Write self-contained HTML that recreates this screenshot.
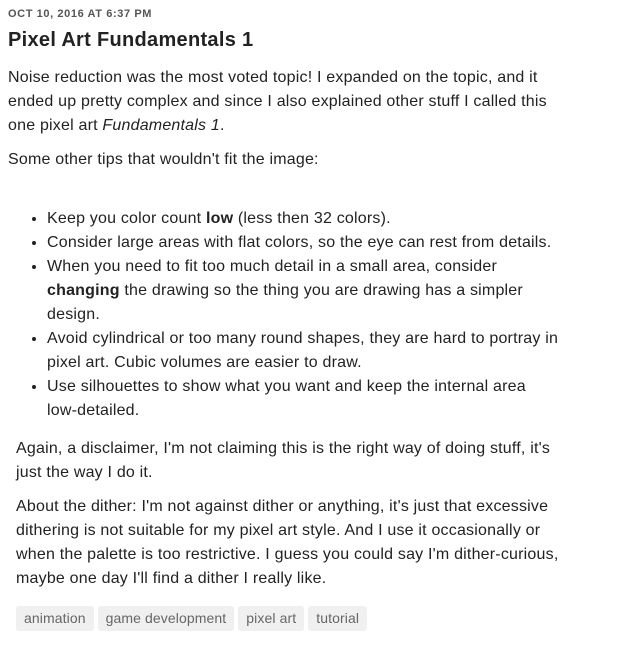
<!DOCTYPE html>
<html><head><style>
body{margin:0;background:#fff;color:#222;font-family:"Liberation Sans",sans-serif;font-size:16px;line-height:24px;width:632px;height:660px;overflow:hidden;white-space:nowrap}
.x{letter-spacing:0.2px}
.d{position:absolute;left:8px;top:7px;font-size:11px;font-weight:bold;letter-spacing:0.6px;color:#555;line-height:14px}
h1{position:absolute;left:8px;top:26px;margin:0;font-size:20px;line-height:28px;font-weight:bold;color:#222;letter-spacing:0.3px}
.p{position:absolute;left:8px}
ul{position:absolute;left:8px;top:207px;margin:0;padding-left:39px}
li{margin:0}
.tags{position:absolute;left:16px;top:606px}
.t{display:inline-block;background:#f0f0f0;color:#666;font-size:14px;height:25px;line-height:25px;padding:0 8px;border-radius:3px;margin-right:4px;letter-spacing:0.1px}
</style></head><body>
<div class="d">OCT 10, 2016 AT 6:37 PM</div>
<h1>Pixel Art Fundamentals 1</h1>
<div class="x">
<div class="p" style="top:66px">Noise reduction was the most voted topic! I expanded on the topic, and it<br>ended up pretty complex and since I also explained other stuff I called this<br>one pixel art <i>Fundamentals 1</i>.</div>
<div class="p" style="top:148px">Some other tips that wouldn't fit the image:</div>
<ul>
<li>Keep you color count <b>low</b> (less then 32 colors).</li>
<li>Consider large areas with flat colors, so the eye can rest from details.</li>
<li>When you need to fit too much detail in a small area, consider<br><b>changing</b> the drawing so the thing you are drawing has a simpler<br>design.</li>
<li>Avoid cylindrical or too many round shapes, they are hard to portray in<br>pixel art. Cubic volumes are easier to draw.</li>
<li>Use silhouettes to show what you want and keep the internal area<br>low-detailed.</li>
</ul>
<div class="p" style="left:16px;top:437px">Again, a disclaimer, I'm not claiming this is the right way of doing stuff, it's<br>just the way I do it.</div>
<div class="p" style="left:16px;top:495px">About the dither: I'm not against dither or anything, it's just that excessive<br>dithering is not suitable for my pixel art style. And I use it occasionally or<br>when the palette is too restrictive. I guess you could say I'm dither-curious,<br>maybe one day I'll find a dither I really like.</div>
</div>
<div class="tags"><span class="t">animation</span><span class="t">game development</span><span class="t">pixel art</span><span class="t">tutorial</span></div>
</body></html>
